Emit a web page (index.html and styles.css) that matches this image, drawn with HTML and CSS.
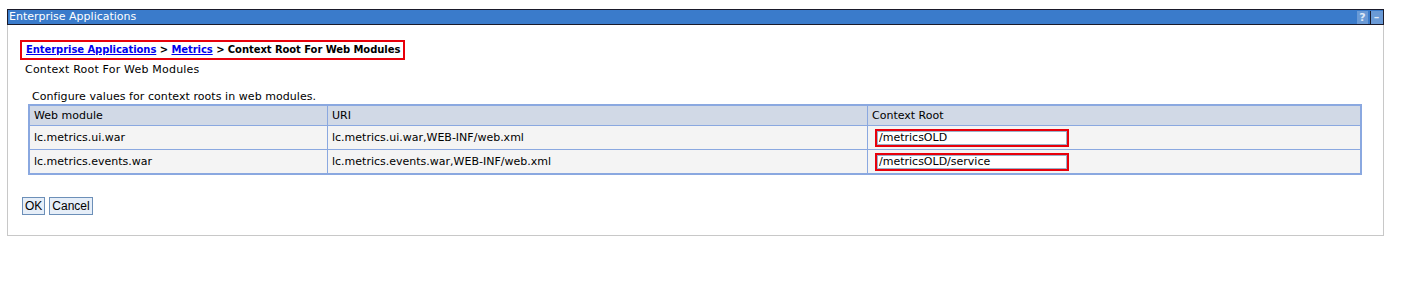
FILE: index.html
```html
<!DOCTYPE html>
<html lang="en">
<head>
    <meta charset="UTF-8">
    <title>Enterprise Applications</title>
    <link rel="stylesheet" href="styles.css">
</head>
<body>
    <div class="portlet">
        <div class="title-bar">
            <span class="title">Enterprise Applications</span>
            <span class="title-icons">
                <span class="tb-btn">?</span>
                <span class="tb-btn">&ndash;</span>
            </span>
        </div>
        <div class="portlet-body">
            <div class="breadcrumb">
                <a href="#">Enterprise Applications</a> &gt; <a href="#">Metrics</a> &gt; Context Root For Web Modules
            </div>
            <div class="page-title">Context Root For Web Modules</div>

            <div class="section">
                <p class="intro">Configure values for context roots in web modules.</p>
                <table class="grid">
                    <tr>
                        <th class="col-module">Web module</th>
                        <th class="col-uri">URI</th>
                        <th>Context Root</th>
                    </tr>
                    <tr>
                        <td>lc.metrics.ui.war</td>
                        <td>lc.metrics.ui.war,WEB-INF/web.xml</td>
                        <td><input type="text" class="ctx-input" value="/metricsOLD"></td>
                    </tr>
                    <tr>
                        <td>lc.metrics.events.war</td>
                        <td>lc.metrics.events.war,WEB-INF/web.xml</td>
                        <td><input type="text" class="ctx-input" value="/metricsOLD/service"></td>
                    </tr>
                </table>
            </div>

            <div class="buttons">
                <button>OK</button>
                <button>Cancel</button>
            </div>
        </div>
    </div>
</body>
</html>
```

FILE: styles.css
```css
body, html {
    margin: 0;
    padding: 0;
    background: #fff;
    font-family: "DejaVu Sans", Verdana, sans-serif;
    font-size: 11px;
    color: #000;
}
body {
    padding: 9px 0 0 7px;
}
.portlet {
    width: 1377px;
}
.title-bar {
    display: flex;
    align-items: center;
    justify-content: space-between;
    height: 14px;
    background-color: #3a7bcb;
    border: 1px solid #1a1a2a;
    color: #fff;
}
.title {
    padding-left: 1px;
    font-size: 11px;
    line-height: 14px;
}
.title-icons {
    display: flex;
    gap: 2px;
    height: 14px;
}
.tb-btn {
    width: 11px;
    height: 13px;
    margin-top: 1px;
    background-color: #6a9ad6;
    color: #dde8f6;
    font-weight: bold;
    font-size: 11px;
    line-height: 13px;
    text-align: center;
}
.tb-btn + .tb-btn {
    border-left: 1px solid #1a1a2a;
    padding-right: 1px;
}
.portlet-body {
    border: 1px solid #c8c8c8;
    border-top: none;
    height: 195px;
    padding: 15px 0 0 12px;
}
.breadcrumb {
    display: inline-block;
    border: 2px solid #e8000b;
    padding: 2px 3px 2px 4px;
    font-weight: bold;
    font-size: 10px;
    line-height: 12px;
    letter-spacing: -0.07px;
}
.breadcrumb a {
    color: #0000ee;
}
.page-title {
    padding: 3px 0 0 5px;
    line-height: 13px;
    letter-spacing: 0.2px;
}
.section {
    padding-left: 8px;
}
.intro {
    margin: 14px 0 1px 4px;
    line-height: 13px;
    letter-spacing: 0.06px;
}
.grid {
    border-collapse: collapse;
    width: 1334px;
    border: 2px solid #8aa8e0;
}
.grid th, .grid td {
    border: 1px solid #8aa8e0;
    padding: 0 4px;
    text-align: left;
    font-weight: normal;
    height: 23px;
}
.grid th {
    background-color: #d1d9e6;
    height: 19px;
}
.grid td {
    background-color: #f4f4f4;
}
.col-module {
    width: 289px;
}
.col-uri {
    width: 531px;
}
.ctx-input {
    display: block;
    box-sizing: border-box;
    width: 194px;
    height: 18px;
    margin-left: 3px;
    border: 2px solid #e8000b;
    padding: 0 2px;
    font-family: "DejaVu Sans", Verdana, sans-serif;
    font-size: 11px;
    background: #fff;
    outline: 1px solid #9bb0c8;
    outline-offset: -3px;
}
.buttons {
    margin-top: 22px;
    margin-left: 2px;
    display: flex;
    gap: 4px;
}
.buttons button {
    height: 18px;
    padding: 0 2px;
    border: 1px solid #6c8fb8;
    background-color: #e6eef8;
    font-family: "Liberation Sans", Arial, sans-serif;
    font-size: 12px;
    line-height: 14px;
    color: #000;
}
```
